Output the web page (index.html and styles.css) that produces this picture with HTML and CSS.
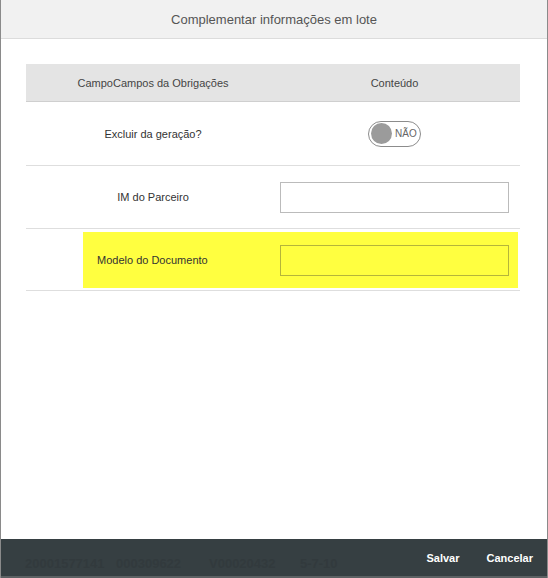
FILE: index.html
```html
<!DOCTYPE html>
<html lang="pt-BR">
  <head>
    <meta charset="UTF-8" />
    <meta name="viewport" content="width=device-width, initial-scale=1" />
    <title>Complementar informações em lote</title>
    <link rel="stylesheet" href="styles.css">
  </head>
  <body>
    <div class="modal">
      <div class="modal-header">
        <h2>Complementar informações em lote</h2>
      </div>

      <div class="modal-body">
        <div class="grid-table">
          <div class="grid-head">
            <div class="cell-label">CampoCampos da Obrigações</div>
            <div class="cell-value">Conteúdo</div>
          </div>

          <div class="grid-row row-first">
            <div class="cell-label">Excluir da geração?</div>
            <div class="cell-value">
              <span class="toggle">
                <span class="toggle-knob"></span>
                <span class="toggle-text">NÃO</span>
              </span>
            </div>
          </div>

          <div class="grid-row">
            <div class="cell-label">IM do Parceiro</div>
            <div class="cell-value">
              <input type="text" class="field" />
            </div>
          </div>

          <!-- linha destacada -->
          <div class="grid-row row-highlight">
            <div class="highlight">
              <div class="highlight-label">Modelo do Documento</div>
              <div class="highlight-value">
                <input type="text" class="field field-yellow" />
              </div>
            </div>
          </div>
        </div>
      </div>

      <div class="modal-footer">
        <div class="ghost" aria-hidden="true">
          <span class="ghost-a">20001577141</span>
          <span class="ghost-b">000309622</span>
          <span class="ghost-c">V00020432</span>
          <span class="ghost-d">5-7-10</span>
        </div>
        <button type="button" class="btn">Salvar</button>
        <button type="button" class="btn">Cancelar</button>
      </div>
    </div>
  </body>
</html>
```

FILE: styles.css
```css
/* Global Styles */
body {
  font-family: "Liberation Sans", Arial, sans-serif;
  margin: 0;
  background-color: white;
}

/* Modal Container */
.modal {
  height: 578px;
  box-sizing: border-box;
  border-left: 1px solid #8a8a8a;
  border-right: 1px solid #8a8a8a;
  display: flex;
  flex-direction: column;
}

.modal-header {
  height: 38px;
  background-color: #f1f1f1;
  border-bottom: 1px solid #dcdcdc;
  display: flex;
  justify-content: center;
  align-items: center;
}

.modal-header h2 {
  margin: 0;
  font-size: 13px;
  font-weight: normal;
  color: #555;
}

.modal-body {
  flex: 1;
  padding: 25px 27px 0 25px;
}

/* Table */
.grid-table {
  font-size: 11px;
  color: #333;
}

.grid-head,
.grid-row {
  display: grid;
  grid-template-columns: 254px 1fr;
  align-items: center;
}

.grid-head {
  height: 37px;
  background-color: #e4e4e4;
  border-bottom: 1px solid #cfcfcf;
  color: #444;
}

.grid-row {
  height: 62px;
  border-bottom: 1px solid #dedede;
}

.grid-row.row-first {
  height: 63px;
}

.cell-label {
  text-align: center;
}

.cell-value {
  display: flex;
  justify-content: center;
  padding-right: 11px;
}

.field {
  width: 229px;
  height: 31px;
  box-sizing: border-box;
  border: 1px solid #bbb;
  background-color: white;
  margin: 0;
}

.field-yellow {
  background-color: transparent;
  border-color: #b5b53a;
}

/* Toggle */
.toggle {
  display: inline-flex;
  align-items: center;
  gap: 3px;
  width: 53px;
  height: 26px;
  box-sizing: border-box;
  border: 1px solid #8c8c8c;
  border-radius: 13px;
  padding-left: 2px;
}

.toggle-knob {
  width: 21px;
  height: 21px;
  border-radius: 50%;
  background-color: #9b9b9b;
}

.toggle-text {
  font-size: 10px;
  color: #666;
}

/* Highlighted row */
.row-highlight {
  display: flex;
  align-items: stretch;
  padding: 3px 2px 2px 57px;
  box-sizing: border-box;
}

.highlight {
  flex: 1;
  display: grid;
  grid-template-columns: 197px 1fr;
  align-items: center;
  background-color: #ffff40;
}

.highlight-label {
  padding-left: 14px;
  color: #333;
}

.highlight-value {
  display: flex;
}

/* Footer */
.modal-footer {
  height: 37px;
  background-color: #363f42;
  border-bottom: 2px solid #5c6163;
  display: flex;
  align-items: center;
  padding-right: 14px;
}

.ghost {
  flex: 1;
  position: relative;
  height: 37px;
  font-size: 13px;
  font-weight: bold;
  color: #323a3d;
}

.ghost span {
  position: absolute;
  top: 17px;
}

.ghost-a { left: 24px; }
.ghost-b { left: 115px; }
.ghost-c { left: 208px; }
.ghost-d { left: 299px; }

.btn {
  background: none;
  border: none;
  color: white;
  font-family: inherit;
  font-size: 11px;
  font-weight: bold;
  padding: 0;
  margin-left: 27px;
  cursor: pointer;
}
```
